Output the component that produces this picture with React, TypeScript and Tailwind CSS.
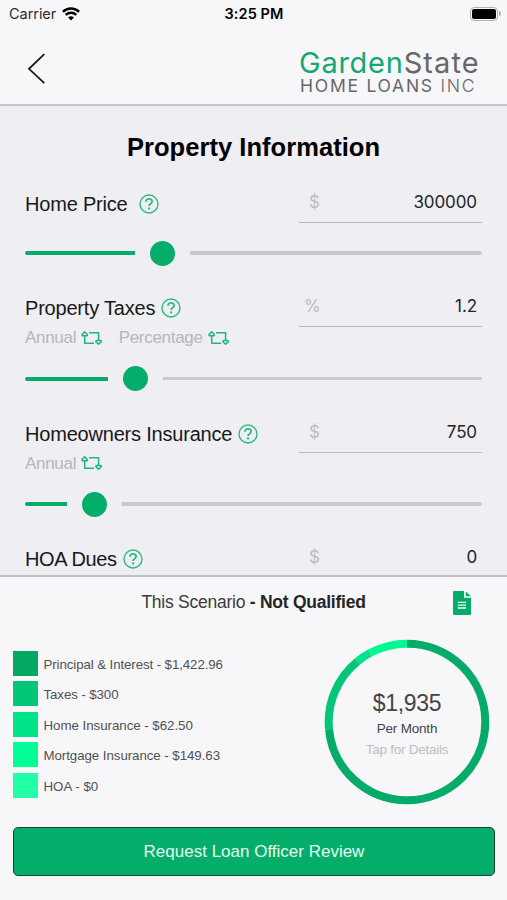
import type { ReactNode } from "react";

function HelpIcon() {
  return (
    <svg width="20" height="20" viewBox="0 0 20 20" fill="none" stroke="#2fba82" className="shrink-0">
      <circle cx="10" cy="10" r="9" strokeWidth="1.4" />
      <path d="M6.9 7.8C6.9 5.9 8.3 4.9 10 4.9s3.1 1 3.1 2.7c0 2.1-3 2.3-3 4.4" strokeWidth="1.8" />
      <circle cx="10.1" cy="14.5" r="1.15" fill="#2fba82" stroke="none" />
    </svg>
  );
}

function SwapIcon() {
  return (
    <svg width="22" height="14" viewBox="0 0 22 14" fill="none" stroke="#22b57b" strokeWidth="1.5" strokeLinejoin="round" className="shrink-0">
      <path d="M3.7 4.6V12.2H13M8 1.8H17.6V9.6" />
      <path d="M3.7 .9 1 3.5Q.9 4.7 2 4.7H5.4Q6.5 4.7 6.4 3.5Z" />
      <path d="M17.6 13.2 14.9 10.6Q14.8 9.4 15.9 9.4H19.3Q20.4 9.4 20.3 10.6Z" />
    </svg>
  );
}

function Slider({ fill }: { fill: number }) {
  return (
    <div className="flex h-[26px] w-[457px] items-center">
      <div className="h-[4px] rounded-l-full bg-[#05ad6a]" style={{ width: fill }} />
      <div className="mx-[15px] size-[25px] shrink-0 rounded-full bg-[#05ad6a]" />
      <div className="h-[3.5px] flex-1 rounded-r-full bg-[#cacacc]" />
    </div>
  );
}

type FieldProps = {
  label: string;
  labelClass: string;
  unit: string;
  unitClass: string;
  value: string;
  children?: ReactNode;
};

function Field({ label, labelClass, unit, unitClass, value, children }: FieldProps) {
  return (
    <div className="flex h-[56px] justify-between">
      <div>
        <div className="flex h-[40px] items-center">
          <span className={`whitespace-nowrap text-[20px] leading-[24px] text-[#18181a] ${labelClass}`}>{label}</span>
          <HelpIcon />
        </div>
        {children}
      </div>
      <div className={`flex h-[39px] w-[183px] shrink-0 items-center justify-between border-b-[1.5px] border-[#b4bdc2] pr-[5px] pb-[2px] font-[Inter,sans-serif] text-[17px] leading-[22px] text-[#242427] ${unitClass}`}>
        <span className="text-[#b9bdc2]">{unit}</span>
        <span className="tracking-[-0.1px]">{value}</span>
      </div>
    </div>
  );
}

const legend = [
  { color: "bg-[#05a862]", text: "Principal & Interest - $1,422.96", track: "tracking-[-0.1px]" },
  { color: "bg-[#04c678]", text: "Taxes - $300", track: "tracking-[-0.1px]" },
  { color: "bg-[#02e489]", text: "Home Insurance - $62.50", track: "tracking-[-0.03px]" },
  { color: "bg-[#01ff98]", text: "Mortgage Insurance - $149.63", track: "tracking-[-0.06px]" },
  { color: "bg-[#22ffa6]", text: "HOA - $0", track: "tracking-[0px]" },
];

const segments = [
  { start: 0, share: 73.54, color: "#05ab69" },
  { start: 73.54, share: 15.5, color: "#04c678" },
  { start: 89.04, share: 3.23, color: "#02e489" },
  { start: 92.27, share: 7.73, color: "#01f994" },
];

export default function App() {
  return (
    <div className="flex h-[900px] w-[507px] flex-col overflow-hidden bg-[#efeef3] font-['Liberation_Sans',Arial,sans-serif]">
      <header className="h-[106px] shrink-0 border-b-2 border-[#c5c5c8] bg-[#f7f7f9]">
        <div className="flex h-[28px] items-center justify-between pr-[6px] pl-[9px] font-[Inter,sans-serif] text-[14.5px] leading-[18px]">
          <div className="flex w-[215px] items-center gap-[6px] text-[#2d2d2f]">
            <span className="tracking-[-0.05px]">Carrier</span>
            <svg width="18" height="14" viewBox="0 0 18 14" fill="none" stroke="#000" strokeWidth="2.4" className="-mt-[1px]">
              <path d="M.9 4.8a11.7 11.7 0 0 1 16.2 0" />
              <path d="M3.7 7.9a7.6 7.6 0 0 1 10.6 0" />
              <path d="M9 13.6 6.1 10.6a4.1 4.1 0 0 1 5.8 0Z" fill="#000" stroke="none" />
            </svg>
          </div>
          <span className="font-semibold tracking-[0.1px] text-black">3:25 PM</span>
          <div className="-mt-[1px] flex w-[217px] items-center justify-end gap-[1px]">
            <div className="h-[14px] w-[28px] rounded-[4px] border-[1.5px] border-[#b3b3b5] p-[1px]">
              <div className="h-full rounded-[2px] bg-black" />
            </div>
            <div className="h-[5px] w-[2px] rounded-r-full bg-[#b3b3b5]" />
          </div>
        </div>
        <div className="flex h-[76px] justify-between pr-[28px] pl-[27px]">
          <svg width="19" height="32" viewBox="0 0 19 32" fill="none" stroke="#19191b" strokeWidth="1.8" className="mt-[25px]">
            <path d="M17.3 1.2 2 15.8 17.3 30.2" />
          </svg>
          <div className="w-[180px] pt-[20px] font-[Inter,sans-serif] whitespace-nowrap text-[#67676b]">
            <div className="flex text-[29px] leading-[29px] tracking-[0.75px]">
              <span className="text-[#12a874]">Garden</span>
              <span className="tracking-[1.1px]">State</span>
            </div>
            <div className="pl-[1px] text-[17.5px] leading-[17px] tracking-[1.75px]">
              HOME LOANS <span className="font-light">INC</span>
            </div>
          </div>
        </div>
      </header>

      <main className="h-[469px] shrink-0 overflow-hidden px-[25px]">
        <h1 className="mt-[26px] text-center text-[25.5px] leading-[30px] font-bold tracking-[0.05px] text-black">Property Information</h1>
        <section className="mt-[22px] h-[104.4px]">
          <Field label="Home Price" labelClass="mr-[11.5px] tracking-[-0.2px]" unit="$" unitClass="pl-[10px]" value="300000" />
          <Slider fill={110} />
        </section>
        <section className="h-[125.4px]">
          <Field label="Property Taxes" labelClass="mr-[6px] tracking-[-0.2px]" unit="%" unitClass="pl-[5px]" value="1.2">
            <div className="flex h-[19px] items-center text-[17px] leading-[19px] tracking-[-0.3px] text-[#b4b7bd]">
              <span className="mr-[5px]">Annual</span>
              <SwapIcon />
              <span className="mr-[5px] ml-[15.5px]">Percentage</span>
              <SwapIcon />
            </div>
          </Field>
          <div className="pt-[21.3px]">
            <Slider fill={83} />
          </div>
        </section>
        <section className="h-[125px]">
          <Field label="Homeowners Insurance" labelClass="mr-[6px] tracking-[-0.2px]" unit="$" unitClass="pl-[10px]" value="750">
            <div className="flex h-[19px] items-center text-[17px] leading-[19px] tracking-[-0.3px] text-[#b4b7bd]">
              <span className="mr-[5px]">Annual</span>
              <SwapIcon />
            </div>
          </Field>
          <div className="pt-[21.3px]">
            <Slider fill={42} />
          </div>
        </section>
        <section>
          <Field label="HOA Dues" labelClass="mr-[6px] tracking-[-0.35px]" unit="$" unitClass="pl-[10px]" value="0" />
        </section>
      </main>

      <footer className="flex-1 border-t-2 border-[#bfbfc5] bg-[#f7f7f9]">
        <div className="relative h-[51px] text-center text-[17.5px] leading-[51px] tracking-[-0.25px] text-[#3b3b3e]">
          This Scenario <b className="text-[#252527]">- Not Qualified</b>
          <svg width="18" height="24" viewBox="0 0 18 24" className="absolute top-[14px] left-[453px]">
            <path d="M1 0H11V6.8H18V23a1 1 0 0 1-1 1H1a1 1 0 0 1-1-1V1a1 1 0 0 1 1-1Z" fill="#05ab69" />
            <path d="M12.8 .4 17.7 5.3H12.8Z" fill="#05ab69" />
            <path d="M4.8 11.4H13M4.8 14.2H13M4.8 17H13" stroke="#e8fff5" strokeWidth="1.3" />
          </svg>
        </div>
        <div className="flex h-[199px] justify-between pr-[17px] pl-[13px]">
          <ul className="flex flex-col gap-[5.6px] pt-[22.5px]">
            {legend.map((item) => (
              <li key={item.text} className="flex h-[25px] items-center gap-[5.5px]">
                <span className={`size-[25px] ${item.color}`} />
                <span className={`pt-[3px] text-[13.3px] leading-[16px] whitespace-nowrap text-[#505054] ${item.track}`}>{item.text}</span>
              </li>
            ))}
          </ul>
          <div className="mt-[11px] grid size-[166px] shrink-0">
            <svg width="166" height="166" viewBox="0 0 166 166" fill="none" strokeWidth="8" className="col-start-1 row-start-1">
              {segments.map((s) => (
                <circle
                  key={s.start}
                  cx="83"
                  cy="83"
                  r="78.3"
                  pathLength="100"
                  stroke={s.color}
                  strokeDasharray={`${s.share} ${100 - s.share}`}
                  transform={`rotate(${s.start * 3.6 - 90} 83 83)`}
                />
              ))}
            </svg>
            <div className="col-start-1 row-start-1 flex flex-col items-center pt-[50px] text-[#444448]">
              <span className="text-[23px] leading-[28px] tracking-[-0.3px]">$1,935</span>
              <span className="mt-[2px] text-[13.5px] leading-[20px] tracking-[-0.2px]">Per Month</span>
              <span className="text-[13.5px] leading-[21px] tracking-[-0.25px] text-[#bbbfc3]">Tap for Details</span>
            </div>
          </div>
        </div>
        <button className="mx-[13px] block h-[49px] w-[482px] rounded-[5px] border-[1.5px] border-[#17462f] bg-[#05ad6a] text-[17px] leading-[20px] text-[#e0fff0]">
          Request Loan Officer Review
        </button>
      </footer>
    </div>
  );
}
